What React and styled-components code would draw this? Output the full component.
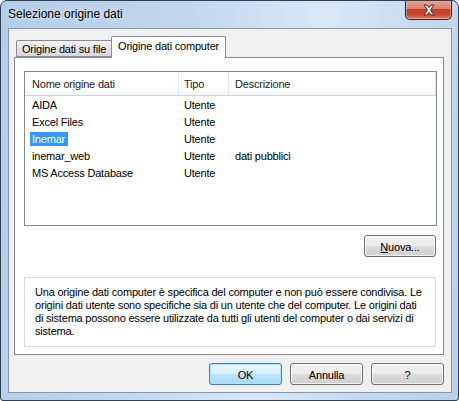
import React from 'react'
import styled, { createGlobalStyle } from 'styled-components'

const GlobalStyle = createGlobalStyle`
  html, body {
    margin: 0;
    padding: 0;
    background: #ffffff;
  }
  * {
    box-sizing: border-box;
  }
`;

const Window = styled.div`
  position: relative;
  width: 459px;
  height: 401px;
  border: 1px solid #2f3f52;
  border-radius: 7px 7px 3px 3px;
  background: linear-gradient(100deg, #b3cce8 0%, #c1d6ee 35%, #dae8f6 62%, #c6daf0 80%, #b8d0ec 100%);
  display: flex;
  flex-direction: column;
  font-family: "Liberation Sans", Arial, sans-serif;
  font-size: 11px;
  letter-spacing: -0.2px;
  color: #000;
  overflow: hidden;
`;

const TitleBar = styled.div`
  height: 27px;
  padding: 6px 0 0 7px;
  font-size: 12px;
  letter-spacing: 0;
  color: #000;
  text-shadow: 0 0 6px rgba(255, 255, 255, 0.9);
`;

const CloseButton = styled.div`
  position: absolute;
  top: -1px;
  right: 6px;
  width: 47px;
  height: 20px;
  border: 1px solid #4a1a14;
  border-top: none;
  border-radius: 0 0 5px 5px;
  background: linear-gradient(#e9a99b 0%, #d7816f 45%, #c0402c 50%, #c84a33 80%, #e08a6f 100%);
  box-shadow: inset 0 0 0 1px rgba(255, 210, 200, 0.45);
  display: flex;
  align-items: center;
  justify-content: center;
`;

const Client = styled.div`
  margin: 0 6px 0 7px;
  height: 365px;
  border: 1px solid #8497b0;
  background: #f0f0f0;
  padding: 7px 7px 0 5px;
  display: flex;
  flex-direction: column;
`;

const TabStrip = styled.div`
  display: flex;
  align-items: flex-end;
  padding-left: 2px;
  height: 21px;
  position: relative;
  z-index: 1;
`;

const Tab = styled.div`
  height: ${p => (p.$active ? '22px' : '17px')};
  margin-bottom: ${p => (p.$active ? '-1px' : '0')};
  margin-left: ${p => (p.$active ? '-1px' : '0')};
  padding: ${p => (p.$active ? '3px 6px 0 6px' : '2px 5px 0 5px')};
  border: 1px solid #898c95;
  border-bottom: ${p => (p.$active ? 'none' : '1px solid #898c95')};
  border-radius: 2px 2px 0 0;
  background: ${p => (p.$active ? '#ffffff' : 'linear-gradient(#f3f3f3, #e4e4e4 50%, #d9d9d9)')};
  white-space: nowrap;
`;

const Panel = styled.div`
  height: 298px;
  border: 1px solid #898c95;
  background: #ffffff;
  padding: 13px 6px 0 9px;
  display: flex;
  flex-direction: column;
`;

const ListView = styled.div`
  height: 155px;
  border: 1px solid #828790;
  background: #ffffff;
`;

const HeaderRow = styled.div`
  display: grid;
  grid-template-columns: 154px 50px 1fr;
  height: 24px;
  background: linear-gradient(#ffffff 0%, #ffffff 55%, #f5f6f7 100%);
  border-bottom: 1px solid #d5d5d5;
`;

const HeaderCell = styled.div`
  display: flex;
  align-items: center;
  padding-left: ${p => p.$pad}px;
  border-right: 1px solid #e3e8ee;
  color: #1e1e1e;
`;

const Row = styled.div`
  display: grid;
  grid-template-columns: 154px 50px 1fr;
  height: 17px;
  align-items: center;
`;

const Cell = styled.div`
  padding-left: ${p => p.$pad}px;
  white-space: nowrap;
`;

const Selected = styled.span`
  display: inline-block;
  margin-left: -2px;
  padding: 1px 3px 1px 2px;
  background: #3399ff;
  color: #ffffff;
`;

const ButtonRow = styled.div`
  display: flex;
  justify-content: flex-end;
  gap: ${p => p.$gap || 0}px;
  margin-top: ${p => p.$top}px;
  padding-right: ${p => p.$right || 0}px;
`;

const Button = styled.div`
  width: ${p => p.$w || 73}px;
  height: 22px;
  border: 1px solid ${p => (p.$default ? '#3c7fb1' : '#707070')};
  border-radius: 3px;
  background: ${p =>
    p.$default
      ? 'linear-gradient(#eaf6fd 0%, #d9f0fc 48%, #bee6fd 50%, #a7d9f5 100%)'
      : 'linear-gradient(#f2f2f2 0%, #ebebeb 48%, #dddddd 50%, #cfcfcf 100%)'};
  box-shadow: inset 0 0 0 1px ${p => (p.$default ? '#aee3f8' : 'rgba(255,255,255,0.7)')};
  display: flex;
  align-items: center;
  justify-content: center;
  padding-top: 1px;
`;

const Mnemonic = styled.span`
  text-decoration: underline;
`;

const GroupBox = styled.div`
  margin-top: 20px;
  height: 70px;
  margin-right: 1px;
  border: 1px solid #d5dfe5;
  padding: 8px 0 0 10px;
  line-height: 13px;
`;

const Line = styled.div`
  white-space: nowrap;
`;

const rows = [
  { name: 'AIDA', type: 'Utente', desc: '' },
  { name: 'Excel Files', type: 'Utente', desc: '' },
  { name: 'Inemar', type: 'Utente', desc: '', selected: true },
  { name: 'inemar_web', type: 'Utente', desc: 'dati pubblici' },
  { name: 'MS Access Database', type: 'Utente', desc: '' },
];

const lines = [
  'Una origine dati computer è specifica del computer e non può essere condivisa. Le',
  'origini dati utente sono specifiche sia di un utente che del computer. Le origini dati',
  'di sistema possono essere utilizzate da tutti gli utenti del computer o dai servizi di',
  'sistema.',
];

const CloseGlyph = () => (
  <svg width="14" height="12" viewBox="0 0 14 12">
    <path
      d="M2 1 L5 1 L7 3.6 L9 1 L12 1 L8.6 6 L12 11 L9 11 L7 8.4 L5 11 L2 11 L5.4 6 Z"
      fill="#ffffff"
      stroke="#5a2018"
      strokeWidth="1"
      strokeLinejoin="round"
    />
  </svg>
);

const App = () => {
  return (
    <>
      <GlobalStyle />
      <Window>
        <TitleBar>Selezione origine dati</TitleBar>
        <CloseButton>
          <CloseGlyph />
        </CloseButton>
        <Client>
          <TabStrip>
            <Tab>Origine dati su file</Tab>
            <Tab $active>Origine dati computer</Tab>
          </TabStrip>
          <Panel>
            <ListView>
              <HeaderRow>
                <HeaderCell $pad={7}>Nome origine dati</HeaderCell>
                <HeaderCell $pad={5}>Tipo</HeaderCell>
                <HeaderCell $pad={6}>Descrizione</HeaderCell>
              </HeaderRow>
              {rows.map(r => (
                <Row key={r.name}>
                  <Cell $pad={7}>{r.selected ? <Selected>{r.name}</Selected> : r.name}</Cell>
                  <Cell $pad={5}>{r.type}</Cell>
                  <Cell $pad={6}>{r.desc}</Cell>
                </Row>
              ))}
            </ListView>
            <ButtonRow $top={9} $right={1}>
              <Button $w={72}>
                <span><Mnemonic>N</Mnemonic>uova...</span>
              </Button>
            </ButtonRow>
            <GroupBox>
              {lines.map(l => (
                <Line key={l}>{l}</Line>
              ))}
            </GroupBox>
          </Panel>
          <ButtonRow $top={8} $gap={8}>
            <Button $default>OK</Button>
            <Button>Annulla</Button>
            <Button>?</Button>
          </ButtonRow>
        </Client>
      </Window>
    </>
  )
}

export default App
